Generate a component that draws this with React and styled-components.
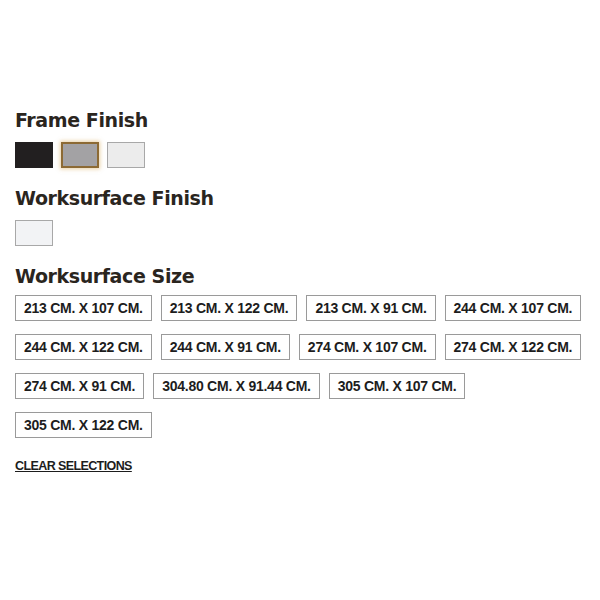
import React from 'react';
import styled, { createGlobalStyle } from 'styled-components';

const GlobalStyle = createGlobalStyle`
body {
  margin: 0;
  background: #fff;
  font-family: "Liberation Sans", Arial, sans-serif;
}
`

const Panel = styled.div`
padding: 108px 15px 0 15px;
width: 600px;
box-sizing: border-box;
`

const Heading = styled.h3`
margin: 0 0 ${props => props.spacing || 10}px 0;
font-family: "DejaVu Sans", "Liberation Sans", sans-serif;
font-size: 19px;
font-weight: 700;
line-height: 24px;
color: #2a251e;
letter-spacing: -0.4px;
`

const SwatchRow = styled.div`
display: flex;
gap: 8px;
margin-bottom: 18px;
`

const Swatch = styled.button`
width: 38px;
height: 26px;
padding: 0;
box-sizing: border-box;
background: ${props => props.color};
border: ${props => props.selected ? '2px solid #8c6a34' : `1px solid ${props.edge || props.color}`};
box-shadow: ${props => props.selected ? '0 0 4px 1px rgba(214,170,90,0.55)' : 'none'};
cursor: pointer;
`

const SizeGrid = styled.div`
display: flex;
flex-wrap: wrap;
gap: 13px 9px;
width: 585px;
`

const SizeButton = styled.button`
height: 26px;
padding: 0 8px;
background: #fff;
border: 1px solid #9a9a9a;
font-family: "Liberation Sans", Arial, sans-serif;
font-size: 14px;
font-weight: 700;
letter-spacing: -0.25px;
color: #1d1d1d;
cursor: pointer;
`

const ClearLink = styled.a`
display: inline-block;
margin-top: 21px;
font-family: "Liberation Sans", Arial, sans-serif;
font-size: 12.5px;
font-weight: 700;
letter-spacing: -0.6px;
color: #1d1d1d;
text-decoration: underline;
cursor: pointer;
`

const sizes = [
  '213 CM. X 107 CM.',
  '213 CM. X 122 CM.',
  '213 CM. X 91 CM.',
  '244 CM. X 107 CM.',
  '244 CM. X 122 CM.',
  '244 CM. X 91 CM.',
  '274 CM. X 107 CM.',
  '274 CM. X 122 CM.',
  '274 CM. X 91 CM.',
  '304.80 CM. X 91.44 CM.',
  '305 CM. X 107 CM.',
  '305 CM. X 122 CM.',
];

const App = () => {
  return (
    <>
      <GlobalStyle />
      <Panel>
        <Heading>Frame Finish</Heading>
        <SwatchRow>
          <Swatch color="#221f20" />
          <Swatch color="#a3a2a4" selected />
          <Swatch color="#ececec" edge="#a8a8a8" />
        </SwatchRow>
        <Heading>Worksurface Finish</Heading>
        <SwatchRow>
          <Swatch color="#f2f3f5" edge="#a8a8a8" />
        </SwatchRow>
        <Heading spacing={7}>Worksurface Size</Heading>
        <SizeGrid>
          {sizes.map(size => (
            <SizeButton key={size}>{size}</SizeButton>
          ))}
        </SizeGrid>
        <ClearLink>CLEAR SELECTIONS</ClearLink>
      </Panel>
    </>
  );
};

export default App;
